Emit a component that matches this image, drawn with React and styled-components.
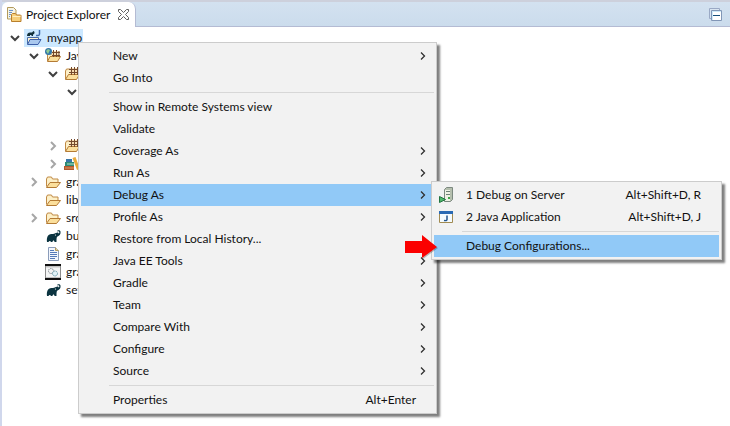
import styled, { createGlobalStyle } from "styled-components";

const GlobalStyle = createGlobalStyle`
  * {
    box-sizing: border-box;
  }

  body {
    margin: 0;
    background: #ffffff;
    color: #111111;
    font-family: Lato, "Open Sans", sans-serif;
    font-size: 12px;
  }

  ul {
    list-style: none;
    margin: 0;
    padding: 0;
  }

  button {
    border: 0;
    padding: 0;
    background: none;
    color: inherit;
    font: inherit;
  }
`;

const Panel = styled.main`
  position: relative;
  display: flex;
  flex-direction: column;
  min-height: 100vh;
  overflow: hidden;
  border-left: 2px solid #d0d7ec;
`;

const TabBar = styled.header`
  display: flex;
  align-items: center;
  justify-content: space-between;
  height: 27px;
  padding-right: 8px;
  border-top: 2px solid #cdd0dc;
  border-bottom: 1px solid #b4bbd3;
  background: linear-gradient(#d3e1f0, #cbdcec);
`;

const Tab = styled.div`
  display: flex;
  align-items: center;
  align-self: stretch;
  height: 25px;
  padding: 0 6px 0 4px;
  border-right: 1px solid #b4bbd3;
  border-radius: 6px 7px 0 0;
  background: #ffffff;
`;

const TabTitle = styled.h1`
  margin: 0 8px 0 4px;
  font-size: 12px;
  font-weight: 400;
  line-height: 24px;
`;

const IconButton = styled.button`
  display: flex;
`;

const Tree = styled.ul`
  padding: 2px 0 0 3px !important;
`;

const Branch = styled.ul`
  padding-left: 19px !important;
`;

const Node = styled.div`
  display: flex;
  align-items: center;
  height: 18px;
`;

const Twisty = styled.button`
  display: flex;
  align-items: center;
  justify-content: center;
  width: 19px;
  height: 18px;
  color: ${(props) => (props.$open ? "#404040" : "#a6a6a6")};
`;

const Label = styled.span`
  display: flex;
  align-items: center;
  gap: 5px;
  height: 18px;
  margin-left: ${(props) => (props.$leaf ? "19px" : "0")};
  padding: 0 1px 0 2px;
  background: ${(props) => (props.$selected ? "#cce8ff" : "transparent")};
  line-height: 18px;
  white-space: nowrap;
`;

const Gap = styled.li`
  height: 36px;
`;

const Menu = styled.ul`
  position: absolute;
  z-index: 1;
  padding: 2px !important;
  border: 1px solid #cccccc;
  background: #f2f2f2;
  box-shadow: 3px 3px 2px rgba(0, 0, 0, 0.5);
`;

const ContextMenu = styled(Menu)`
  left: 76px;
  top: 42px;
  width: 359px;
`;

const SubMenu = styled(Menu)`
  left: calc(100% - 3px);
  top: -3px;
  width: 291px;
`;

const MenuItem = styled.li`
  position: relative;
`;

const MenuButton = styled.button`
  display: grid;
  grid-template-columns: 32px 1fr auto 18px;
  align-items: center;
  width: 100%;
  height: 22px;
  background: ${(props) => (props.$active ? "#91c9f7" : "transparent")};
  text-align: left;
  line-height: 22px;
`;

const MenuIcon = styled.span`
  display: flex;
  padding-left: 4px;
`;

const ArrowSlot = styled.span`
  display: flex;
  padding-left: 4px;
`;

const Separator = styled.li`
  height: 1px;
  margin: 3px 0 3px 28px;
  background: #d7d7d7;
`;

const Pointer = styled.svg`
  position: absolute;
  left: -30px;
  top: 0;
`;

function Icon({ children, size = 16 }) {
  return (
    <svg width={size} height={size} viewBox="0 0 16 16" aria-hidden="true">
      {children}
    </svg>
  );
}

function Chevron({ open }) {
  return (
    <svg width="10" height="10" viewBox="0 0 10 10" fill="none" aria-hidden="true">
      <path
        d={open ? "M1 3l4 4 4-4" : "M3 1l4 4-4 4"}
        stroke="currentColor"
        strokeWidth="2"
      />
    </svg>
  );
}

function FolderShape() {
  return (
    <>
      <path
        d="M1.500 12.500V5l1-2h4l1 2h5.500v3"
        fill="#fdf0c8"
        stroke="#c08a45"
        strokeLinejoin="round"
      />
      <path
        d="M1.500 13.500L5 8.500h10.500l-4 5z"
        fill="#fbdf9c"
        stroke="#b47b35"
        strokeLinejoin="round"
      />
    </>
  );
}

function PackageFolderIcon() {
  return (
    <Icon>
      <path
        d="M1.500 13V5l1-2h11v5"
        fill="#fdf0c8"
        stroke="#c08a45"
        strokeLinejoin="round"
      />
      <path
        d="M1.500 13.500L4.500 8.500h11l-3 5z"
        fill="#fbdf9c"
        stroke="#b47b35"
        strokeLinejoin="round"
      />
      <path d="M6 2h8v6H6z" fill="#f6dcb0" />
      <path
        d="M5 3.500h10M5 6.500h10M7.500 1v8M10.500 1v8M13.500 1v8"
        fill="none"
        stroke="#75492b"
      />
    </Icon>
  );
}

function JavaFolderIcon() {
  return (
    <Icon>
      <path d="M2.500 13V6h11v2" fill="#fdf0c8" stroke="#c08a45" />
      <path
        d="M2.500 13.500L5 8.500h10.500l-3 5z"
        fill="#fbdf9c"
        stroke="#b47b35"
        strokeLinejoin="round"
      />
      <path d="M7 3h7v5H7z" fill="#f6dcb0" />
      <path d="M7 4.500h8M7 7.500h8M8.500 2v7M11.500 2v7M14 3v6" fill="none" stroke="#75492b" />
      <circle cx="3.500" cy="3.500" r="3.500" fill="#3377a8" />
      <path d="M1 3l2-2 2 1-1 2-1 2z" fill="#8fcb93" />
    </Icon>
  );
}

function ExplorerIcon() {
  return (
    <Icon>
      <path d="M1.500 .5h6l2.500 2.500v9h-8.500z" fill="#f5f3e4" stroke="#b39a5b" />
      <path d="M3 3.500h4M3 5.500h3M3 7.500h2M3 9.500h1" stroke="#6f93c7" />
      <path
        d="M5.500 14.500v-7l1-1h3l1 1.500h4l.5.500v6z"
        fill="#f7cf7b"
        stroke="#b97f2c"
      />
      <path d="M6.500 9.500h8" stroke="#fff0c2" />
    </Icon>
  );
}

function ProjectIcon() {
  return (
    <Icon>
      <path d="M1.500 14V7.500h11V9" fill="#fff4d2" stroke="#4a6da7" />
      <path
        d="M1.500 14.500L4 9.500h11l-3 5z"
        fill="#a9c8ee"
        stroke="#3c5fa9"
        strokeLinejoin="round"
      />
      <path d="M1 6c0-3 2-4 4-3.500 1 0 2-.5 2-1.500 2 0 2 3 0 3.500V6H5.500V5H4v1z" fill="#12303b" />
      <path d="M13.500 0v4q0 2-3.500 1.500" fill="none" stroke="#3f6cab" strokeWidth="1.500" />
    </Icon>
  );
}

function FolderIcon() {
  return (
    <Icon>
      <FolderShape />
    </Icon>
  );
}

function LibraryIcon() {
  return (
    <Icon>
      <path d="M2 3h6v3H2z" fill="#3976a8" />
      <path d="M1 6h9v4H1z" fill="#2d8b76" />
      <path d="M3 8h7" stroke="#b8dfc9" />
      <path d="M0 10h10v4H0z" fill="#b3572c" />
      <path d="M1 12h9" stroke="#e09a63" />
      <path d="M8.500 2l3-1L16 13l-3 1z" fill="#e9ab3d" />
    </Icon>
  );
}

function GradleIcon() {
  return (
    <Icon>
      <path
        d="M2 14c-.5-4 .5-8 4.500-8 2 0 3.500-.5 4.500-1 1.500-1 2.500-.5 2.500.500 1 0 1-1.500.5-2-.5-.5-1.500-.5-2 0 0-1.500 3-2 3.500 0 .5 2.500-1 4.500-3 5-1 .5-1 2-1 5.500H9.500c0-2-2-2-2 0H6c-.5-1.500-2-1.500-2.500 0z"
        fill="#0b3440"
      />
      <circle cx="10.500" cy="7" r=".6" fill="#ffffff" />
    </Icon>
  );
}

function FileIcon() {
  return (
    <Icon>
      <path d="M3.500 1.500h7l3 3v10h-10z" fill="#f2f6fd" stroke="#8b9cba" />
      <path d="M10.500 1.500v3h3" fill="#e9d69b" stroke="#b49b5f" />
      <path d="M5 4.500h4M5 6.500h7M5 8.500h7M5 10.500h7M5 12.500h5" stroke="#5579b8" />
    </Icon>
  );
}

function BatchIcon() {
  return (
    <Icon>
      <path d="M.5 2h15v12H.5z" fill="#f4f5f5" stroke="#8c8c8c" />
      <path d="M0 1h16M0 15h16" stroke="#111111" strokeWidth="2" />
      <path d="M1 3h14" stroke="#c5c5c5" />
      <circle cx="6" cy="7" r="2.500" fill="none" stroke="#858c92" strokeDasharray="1.500 .6" />
      <circle cx="10" cy="9.500" r="2.500" fill="#e2f2f8" stroke="#6c9eac" strokeDasharray="1.500 .6" />
    </Icon>
  );
}

function ServerIcon() {
  return (
    <Icon>
      <path d="M6.500 2.500l2-2h6v12l-2 2h-6z" fill="#b5bfae" stroke="#7c8980" />
      <path d="M7 3h5v11H7z" fill="#eef1e4" />
      <path d="M8 4.500h4M8 7.500h4" stroke="#6e8177" />
      <path d="M10 11h2" stroke="#43a34b" strokeWidth="2" />
      <path d="M1.500 9.500v6l6-3z" fill="#4fb76b" stroke="#21733f" />
    </Icon>
  );
}

function JavaAppIcon() {
  return (
    <Icon>
      <path d="M1.500 3.500h13v10h-13z" fill="#f5fbff" stroke="#a18b52" />
      <path d="M1 3.500h14" stroke="#2a6ab4" strokeWidth="3" />
      <path d="M9 6.500v4q0 1.500-3 1" fill="none" stroke="#24558d" strokeWidth="1.500" />
    </Icon>
  );
}

const tree = [
  {
    label: "myapp",
    icon: <ProjectIcon />,
    open: true,
    selected: true,
    children: [
      {
        label: "Java",
        icon: <JavaFolderIcon />,
        open: true,
        children: [
          { icon: <PackageFolderIcon />, open: true, children: [{ open: true }] },
          { gap: true },
          { icon: <PackageFolderIcon />, open: false },
          { icon: <LibraryIcon />, open: false },
        ],
      },
      { label: "gradle", icon: <FolderIcon />, open: false },
      { label: "lib", icon: <FolderIcon /> },
      { label: "src", icon: <FolderIcon />, open: false },
      { label: "build", icon: <GradleIcon /> },
      { label: "gradlew", icon: <FileIcon /> },
      { label: "gradlew", icon: <BatchIcon /> },
      { label: "settings", icon: <GradleIcon /> },
    ],
  },
];

const debugItems = [
  { label: "1 Debug on Server", icon: <ServerIcon />, keys: "Alt+Shift+D, R" },
  { label: "2 Java Application", icon: <JavaAppIcon />, keys: "Alt+Shift+D, J" },
  { separator: true },
  { label: "Debug Configurations...", active: true, pointer: true },
];

const menuItems = [
  { label: "New", arrow: true },
  { label: "Go Into" },
  { separator: true },
  { label: "Show in Remote Systems view" },
  { label: "Validate" },
  { label: "Coverage As", arrow: true },
  { label: "Run As", arrow: true },
  { label: "Debug As", arrow: true, active: true, items: debugItems },
  { label: "Profile As", arrow: true },
  { label: "Restore from Local History..." },
  { label: "Java EE Tools", arrow: true },
  { label: "Gradle", arrow: true },
  { label: "Team", arrow: true },
  { label: "Compare With", arrow: true },
  { label: "Configure", arrow: true },
  { label: "Source", arrow: true },
  { separator: true },
  { label: "Properties", keys: "Alt+Enter" },
];

function TreeNodes({ nodes }) {
  return nodes.map((node, i) => {
    if (node.gap) return <Gap key={i} />;
    const leaf = node.open === undefined;
    return (
      <li key={i}>
        <Node>
          {!leaf && (
            <Twisty
              type="button"
              $open={node.open}
              aria-expanded={node.open}
              aria-label="Toggle"
            >
              <Chevron open={node.open} />
            </Twisty>
          )}
          {node.icon && (
            <Label $leaf={leaf} $selected={node.selected}>
              {node.icon}
              {node.label}
            </Label>
          )}
        </Node>
        {node.children && (
          <Branch>
            <TreeNodes nodes={node.children} />
          </Branch>
        )}
      </li>
    );
  });
}

function MenuItems({ items }) {
  return items.map((item, i) =>
    item.separator ? (
      <Separator key={i} role="separator" />
    ) : (
      <MenuItem key={i} role="none">
        <MenuButton type="button" role="menuitem" $active={item.active}>
          <MenuIcon>{item.icon}</MenuIcon>
          <span>{item.label}</span>
          <span>{item.keys}</span>
          <ArrowSlot>
            {item.arrow && (
              <svg width="6" height="8" viewBox="0 0 6 8" fill="none" aria-hidden="true">
                <path d="M1 .5L4.500 4 1 7.500" stroke="#303030" strokeWidth="1.300" />
              </svg>
            )}
          </ArrowSlot>
        </MenuButton>
        {item.pointer && (
          <Pointer width="36" height="24" viewBox="0 0 36 24" aria-hidden="true">
            <path
              d="M1 7h17V1l15 11-15 11v-6H1z"
              fill="#000000"
              opacity="0.250"
              transform="translate(1 1)"
            />
            <path d="M1 6h17V0l15 12-15 11v-5H1z" fill="#fb0000" />
          </Pointer>
        )}
        {item.items && (
          <SubMenu role="menu" aria-label={item.label}>
            <MenuItems items={item.items} />
          </SubMenu>
        )}
      </MenuItem>
    )
  );
}

export default function App() {
  return (
    <>
      <GlobalStyle />
      <Panel>
        <TabBar>
          <Tab>
            <ExplorerIcon />
            <TabTitle>Project Explorer</TabTitle>
            <IconButton type="button" aria-label="Close">
              <svg width="11" height="11" viewBox="0 0 11 11" aria-hidden="true">
                <path
                  d="M.5.5h2l3 3 3-3h2v2l-3 3 3 3v2h-2l-3-3-3 3h-2v-2l3-3-3-3z"
                  fill="#ffffff"
                  stroke="#606060"
                />
              </svg>
            </IconButton>
          </Tab>
          <IconButton type="button" aria-label="Collapse All">
            <svg width="13" height="13" viewBox="0 0 13 13" aria-hidden="true">
              <path d="M.5.5h10v10H.5z" fill="#d9e5f1" stroke="#9aa9c5" />
              <path d="M2.500 2.500h10v10h-10z" fill="#ffffff" stroke="#8196b6" />
              <path d="M3 3.500h9M3.500 4v8" stroke="#cdeafa" />
              <path d="M4 7.500h7" stroke="#164f7c" />
            </svg>
          </IconButton>
        </TabBar>
        <Tree>
          <TreeNodes nodes={tree} />
        </Tree>
        <ContextMenu role="menu" aria-label="Project">
          <MenuItems items={menuItems} />
        </ContextMenu>
      </Panel>
    </>
  );
}
